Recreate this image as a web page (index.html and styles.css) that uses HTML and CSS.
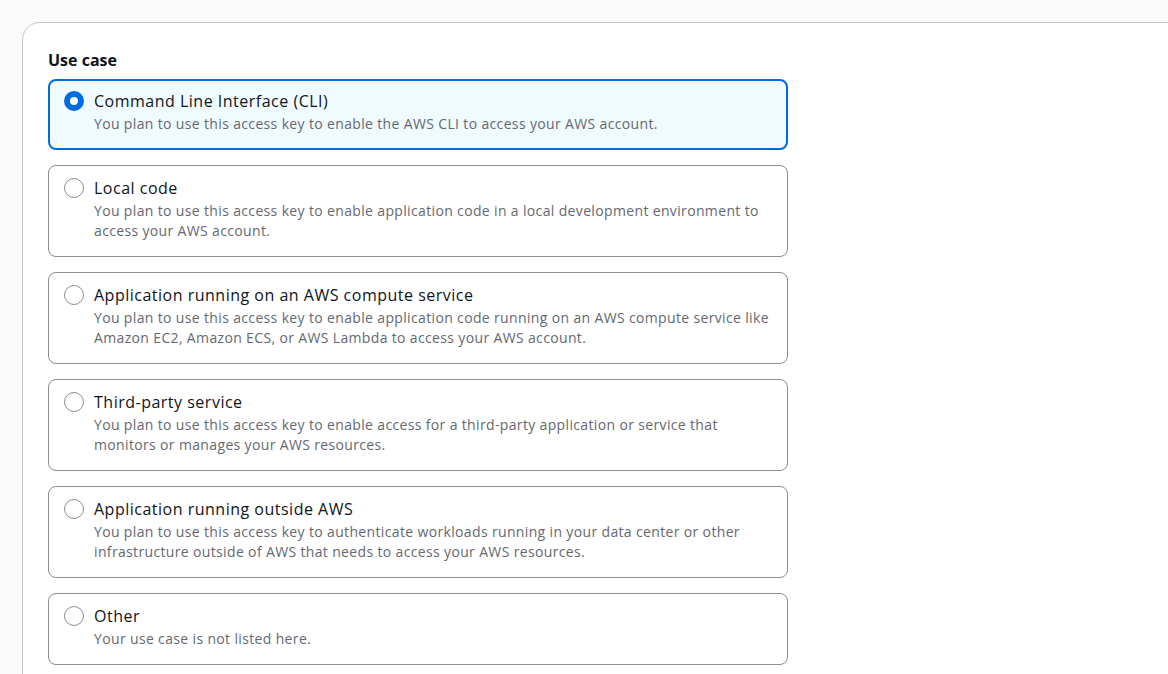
FILE: index.html
```html
<!DOCTYPE html>
<html lang="en">
<head>
<meta charset="utf-8">
<title>Use case</title>
<link rel="stylesheet" href="styles.css">
</head>
<body>
<div class="card">
  <div class="label">Use case</div>
  <div class="tiles">
    <div class="tile selected">
      <span class="radio on"></span>
      <div class="tile-text">
        <div class="tile-title">Command Line Interface (CLI)</div>
        <div class="tile-desc">You plan to use this access key to enable the AWS CLI to access your AWS account.</div>
      </div>
    </div>
    <div class="tile">
      <span class="radio"></span>
      <div class="tile-text">
        <div class="tile-title">Local code</div>
        <div class="tile-desc">You plan to use this access key to enable application code in a local development environment to access your AWS account.</div>
      </div>
    </div>
    <div class="tile">
      <span class="radio"></span>
      <div class="tile-text">
        <div class="tile-title">Application running on an AWS compute service</div>
        <div class="tile-desc">You plan to use this access key to enable application code running on an AWS compute service like Amazon EC2, Amazon ECS, or AWS Lambda to access your AWS account.</div>
      </div>
    </div>
    <div class="tile">
      <span class="radio"></span>
      <div class="tile-text">
        <div class="tile-title">Third-party service</div>
        <div class="tile-desc">You plan to use this access key to enable access for a third-party application or service that monitors or manages your AWS resources.</div>
      </div>
    </div>
    <div class="tile">
      <span class="radio"></span>
      <div class="tile-text">
        <div class="tile-title">Application running outside AWS</div>
        <div class="tile-desc">You plan to use this access key to authenticate workloads running in your data center or other infrastructure outside of AWS that needs to access your AWS resources.</div>
      </div>
    </div>
    <div class="tile">
      <span class="radio"></span>
      <div class="tile-text">
        <div class="tile-title">Other</div>
        <div class="tile-desc">Your use case is not listed here.</div>
      </div>
    </div>
  </div>
</div>
</body>
</html>
```

FILE: styles.css
```css
html, body {
  margin: 0;
  padding: 0;
  background: #fafafa;
  overflow: hidden;
  height: 100%;
}
body {
  padding: 22px 0 0 22px;
  font-family: "Open Sans", "Noto Sans", sans-serif;
  color: #0f141a;
  box-sizing: border-box;
}
.card {
  width: 1200px;
  min-height: 700px;
  background: #ffffff;
  border: 1px solid #c6c6cd;
  border-radius: 18px;
  padding: 26px 25px;
  box-sizing: border-box;
}
.label {
  font-size: 16px;
  font-weight: 700;
  line-height: 22px;
  margin-bottom: 8px;
}
.tiles {
  width: 740px;
  display: flex;
  flex-direction: column;
  gap: 15px;
}
.tile {
  display: flex;
  align-items: flex-start;
  gap: 10px;
  border: 1px solid #8c8c94;
  border-radius: 8px;
  padding: 11px 15px 15px;
  background: #ffffff;
}
.tile.selected {
  border: 2px solid #006ce0;
  background: #f0fbff;
  padding: 9px 14px 14px;
}
.radio {
  flex: none;
  width: 20px;
  height: 20px;
  margin-top: 1px;
  box-sizing: border-box;
  border-radius: 50%;
  border: 1.5px solid #8c8c94;
  background: #ffffff;
}
.radio.on {
  border: 6px solid #006ce0;
}
.tile-title {
  font-size: 16px;
  line-height: 22px;
  letter-spacing: 0.5px;
  color: #0f141a;
  margin-bottom: 2px;
}
.tile-desc {
  font-size: 14px;
  line-height: 20px;
  letter-spacing: 0.35px;
  color: #656871;
}
```
